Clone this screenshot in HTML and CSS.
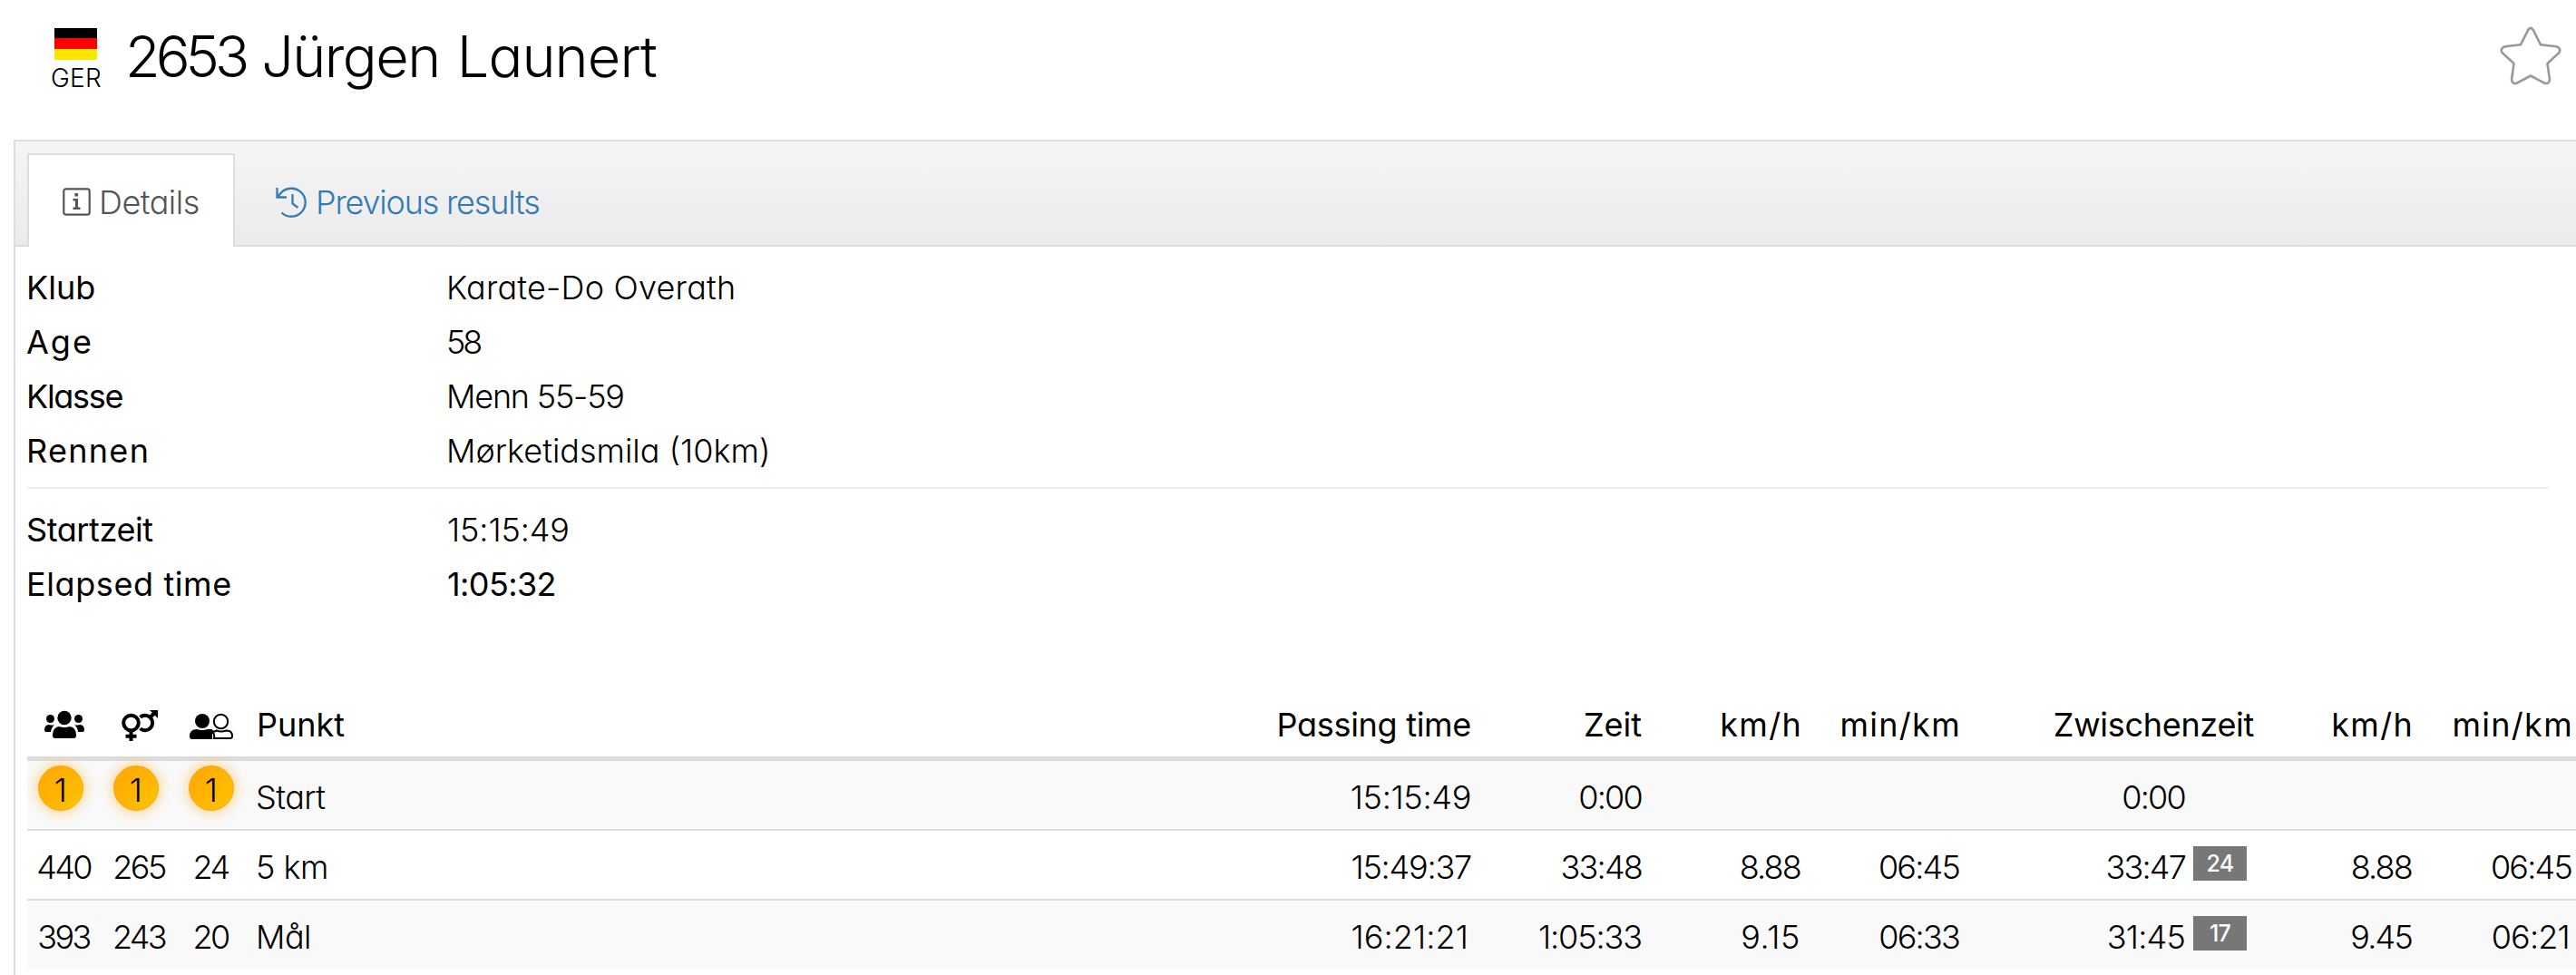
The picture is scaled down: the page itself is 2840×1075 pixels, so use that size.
FILE: index.html
```html
<!DOCTYPE html>
<html lang="de">
<head>
<meta charset="utf-8">
<title>2653 Jürgen Launert</title>
<link rel="stylesheet" href="styles.css">
</head>
<body>
<header class="head">
  <div class="nation">
    <svg class="flag" viewBox="0 0 47 35"><path fill="#000" d="M0 0h47v12H0z"/><path fill="#f00" d="M0 11h47v12H0z"/><path fill="#ffe600" d="M0 23h47v12H0z"/></svg>
    <span class="code">GER</span>
  </div>
  <h1 class="name"><span class="bib">2653</span> Jürgen <span class="last-name">Launert</span></h1>
  <svg class="star" viewBox="0 0 68 66"><path d="M31 4.300Q34 -.5 37 4.300L45 20.300L62 22.300Q68 24 65.500 29L52.500 41L55 59Q54 64.500 49 62.500L34 54.500L19 62.500Q14 64.500 13 59L15.500 41L2.500 29Q0 24 6 22.300L23 20.300Z"/></svg>
</header>
<main class="panel">
  <nav class="tabs">
    <a class="tab active">
      <svg class="info" viewBox="0 0 31 31"><rect x="1.300" y="1.300" width="28.400" height="28.400" rx="2.500" fill="none" stroke="currentColor" stroke-width="2.200"/><path fill="currentColor" d="M13.400 6h3.600v3.600h-3.600zM11.500 12h5.500v9.500h2.500v2.500h-8v-2.500h2.500v-7h-2.500z"/></svg>
      <span class="t-details">Details</span>
    </a>
    <a class="tab">
      <svg class="history" viewBox="0 0 36 35" fill="none" stroke="currentColor" stroke-width="2.300"><path d="M1.500 1v10.500h10.500M2 11L5.500 7A15.500 15.500 0 1 1 6.500 28.500M18.500 8v10.500l6 4.500"/></svg>
      <span class="t-previous">Previous results</span>
    </a>
  </nav>
  <div class="content">
    <dl class="facts">
      <dt class="t-klub">Klub</dt><dd class="t-karate">Karate-Do Overath</dd>
      <dt class="t-age">Age</dt><dd class="t-n">58</dd>
      <dt class="t-klasse">Klasse</dt><dd class="t-menn">Menn 55-59</dd>
      <dt class="t-rennen">Rennen</dt><dd>Mørketidsmila (10km)</dd>
    </dl>
    <hr class="rule">
    <dl class="facts">
      <dt class="t-start">Startzeit</dt><dd class="start">15:15:49</dd>
      <dt class="t-elapsed">Elapsed time</dt><dd class="start elapsed">1:05:32</dd>
    </dl>
    <table class="splits">
      <colgroup><col class="c1"><col class="c2"><col class="c3"><col class="c4"><col class="c5"><col class="c6"><col class="c7"><col class="c8"><col class="c9"><col class="c10"><col class="c11"></colgroup>
      <thead>
        <tr>
          <th class="rank"><svg class="ico" viewBox="0 0 44 34"><circle cx="22" cy="10.500" r="7.700"/><circle cx="6.500" cy="11.500" r="4.500"/><circle cx="37.500" cy="11.500" r="4.500"/><path d="M9 30q0-9 7-10q6 2 12 0q7 1 7 10q0 3-3 3h-20q-3 0-3-3zM0 24q0-6 5-6q4 1 6 0Q7.500 21 7 26h-5q-2 0-2-2zM44 24q0-6-5-6q-4 1-6 0q3.500 3 4 8h5q2 0 2-2z"/></svg></th>
          <th class="rank"><svg class="ico gender" viewBox="0 0 42 36"><g fill="none" stroke="#000" stroke-width="4"><circle cx="11.500" cy="15" r="8.300"/><path d="M11.500 23v12M5.500 29.800h12M21.500 8.700A8.300 8.300 0 1 1 21.500 21.300M32 9.500L38 3.500"/></g><path d="M32 1h9v9z"/></svg></th>
          <th class="rank"><svg class="ico people" viewBox="0 0 50 32"><circle cx="15" cy="11" r="8"/><path d="M1 28q0-8 8-8q6 2 12 0h5v11H4q-3 0-3-3z"/><circle cx="35.500" cy="11.500" r="7.700" fill="none" stroke="#000" stroke-width="2"/><path d="M25 22q4 1 5.500-.5q5 2 11 0q6.500 0 6.500 6q0 2.500-2.500 2.500H28q1-4-2-7.500" fill="none" stroke="#000" stroke-width="2"/></svg></th>
          <th class="txt">Punkt</th><th class="t-passing">Passing time</th><th>Zeit</th><th class="t-pace">km/h</th><th class="t-pace">min/km</th><th class="t-passing">Zwischenzeit</th><th class="t-pace">km/h</th><th class="t-pace">min/km</th>
        </tr>
      </thead>
      <tbody>
        <tr class="odd"><td class="won"><span class="medal">1</span></td><td class="won"><span class="medal">1</span></td><td class="won"><span class="medal">1</span></td><td class="txt">Start</td><td class="clock">15:15:49</td><td>0:00</td><td></td><td></td><td><span class="nobadge">0:00</span></td><td></td><td></td></tr>
        <tr><td class="rank">440</td><td class="rank">265</td><td class="rank">24</td><td class="txt">5 km</td><td class="clock c2nd">15:49:37</td><td>33:48</td><td>8.88</td><td>06:45</td><td>33:47<span class="badge">24</span></td><td>8.88</td><td>06:45</td></tr>
        <tr class="odd last"><td class="rank">393</td><td class="rank">243</td><td class="rank">20</td><td class="txt">Mål</td><td class="clock c3rd">16:21:21</td><td class="long">1:05:33</td><td class="ones">9.15</td><td>06:33</td><td class="mid">31:45<span class="badge">17</span></td><td>9.45</td><td class="mid">06:21</td></tr>
      </tbody>
    </table>
  </div>
</main>
</body>
</html>
```
FILE: styles.css
```css
* { box-sizing: border-box; }
body {
  margin: 0;
  background: #fff;
  color: #000;
  font: 300 36px/51px Inter, "Liberation Sans", sans-serif;
  font-feature-settings: "cv11";
  overflow: hidden;
}
svg { display: block; }
.head { display: flex; height: 154px; padding-left: 55px; }
.nation { width: 84px; padding-top: 31px; }
.flag { width: 47px; height: 35px; margin-left: 5px; }
.code { display: block; font-size: 28px; line-height: 34px; margin: 3px 0 0 1px; letter-spacing: .3px; }
.name { margin: 24px 0 0 -1px; font-size: 63px; line-height: 76px; font-weight: 350; letter-spacing: -1.600px; }
.bib { margin-right: 2px; letter-spacing: -5px; }
.last-name { margin-left: 3px; letter-spacing: -.9px; }
.star { width: 68px; height: 66px; margin: 29px 16px 0 auto; fill: none; stroke: #999; stroke-width: 2.6; }

.panel { margin-left: 15px; border: solid #ddd; border-width: 2px 0 0 2px; height: 921px; }
.tabs {
  display: flex;
  height: 116px;
  padding: 13px 0 0 13px;
  border-bottom: 2px solid #ddd;
  background: linear-gradient(#f5f5f5, #ebebeb);
}
.tab {
  display: flex;
  height: 103px;
  padding: 27px 37px 0 43px;
  border: 2px solid transparent;
  border-bottom: 0;
  color: #337ab7;
}
.tab.active { width: 229px; padding-left: 37px; border-color: #ddd; background: #fff; color: #555; }
.info { width: 31px; height: 31px; margin: 9px 9px 0 0; flex: none; }
.history { width: 36px; height: 35px; margin: 8px 8px 0 0; flex: none; }
.t-details { letter-spacing: -.5px; }
.t-previous { letter-spacing: -1.2px; }

.content { padding: 15px 0 0 13px; }
.facts { display: grid; grid-template-columns: 462px 1fr; margin: 0; line-height: 60px; }
.facts dt { margin-left: -1px; font-weight: 400; }
.facts dd { margin: 0; }
.rule { height: 2px; margin: 10px 30px 15px 0; border: 0; background: #eee; }
.t-klub { letter-spacing: 0; }
.t-age { letter-spacing: 2px; }
.t-klasse { letter-spacing: -1.300px; }
.t-rennen { letter-spacing: 1.300px; }
.t-start { letter-spacing: -.4px; }
.t-elapsed { letter-spacing: .6px; }
.t-karate { letter-spacing: .2px; }
.t-menn { letter-spacing: -1.2px; }
.t-n { letter-spacing: -3px; }
.facts .start { padding-left: 1px; letter-spacing: -.1px; }
.facts .elapsed { font-weight: 400; letter-spacing: -.6px; }

.splits { width: 2817px; margin-top: 85px; table-layout: fixed; border-collapse: separate; border-spacing: 0; }
.c1 { width: 82px; } .c2 { width: 84px; } .c3 { width: 74px; } .c4 { width: 1124px; }
.c5 { width: 240px; } .c6 { width: 188px; } .c7, .c8 { width: 175px; }
.c9 { width: 325px; } .c10 { width: 174px; } .c11 { width: 176px; }
.splits th { height: 80px; padding: 15px 12px 9px 0; border-bottom: 5px solid #ddd; font-weight: 400; text-align: right; white-space: nowrap; }
.splits th.t-pace { padding-right: 10px; letter-spacing: 1.300px; }
.splits th.t-passing { letter-spacing: -.3px; }
.splits td { height: 77px; padding: 15px 12px 9px 0; border-bottom: 2px solid #ddd; text-align: right; vertical-align: top; letter-spacing: -1.800px; white-space: nowrap; }
.splits .last td { height: 75px; border-bottom: 0; }
.odd { background: #f9f9f9; }
.splits .txt { padding-left: 13px; text-align: left; }
.splits td.txt { padding-left: 12px; letter-spacing: -.5px; }
.splits td.clock { letter-spacing: -.3px; }
.splits td.c2nd { letter-spacing: -1.200px; }
.splits td.c3rd { padding-right: 15px; letter-spacing: .1px; }
.splits td.long { letter-spacing: -1.100px; }
.splits td.ones { letter-spacing: .6px; }
.splits td.mid { padding-right: 14px; letter-spacing: -.8px; }
.splits .rank { padding-left: 0; padding-right: 0; text-align: center; }
.splits td.rank { padding-right: 2px; letter-spacing: -2.600px; }
.ico { width: 44px; height: 34px; margin: -3px auto 0; }
.gender { width: 42px; height: 36px; margin-top: 1px; }
.people { width: 50px; height: 32px; margin-top: 0; }
.splits td.won { padding: 5px 0 0 12px; text-align: left; }
.splits .won + .won { padding-left: 13px; }
.splits .won + .won + .won { padding-left: 12px; }
.medal {
  display: block;
  width: 50px;
  height: 50px;
  padding: 3px 2px 0 0;
  border: 1px solid #ffa010;
  border-radius: 50%;
  background: linear-gradient(135deg, #ffa500, #ffc400);
  box-shadow: 0 0 15px rgba(255, 165, 0, .6);
  line-height: 46px;
  text-align: center;
}
.badge {
  display: inline-block;
  width: 59px;
  height: 38px;
  margin: 2px 8px 0 9px;
  background: #777;
  color: #fff;
  font-size: 25px;
  font-weight: 500;
  line-height: 38px;
  text-align: center;
  vertical-align: top;
  letter-spacing: -.8px;
}
.mid .badge { margin-right: 6px; }
.nobadge { margin-right: 76px; }
```
